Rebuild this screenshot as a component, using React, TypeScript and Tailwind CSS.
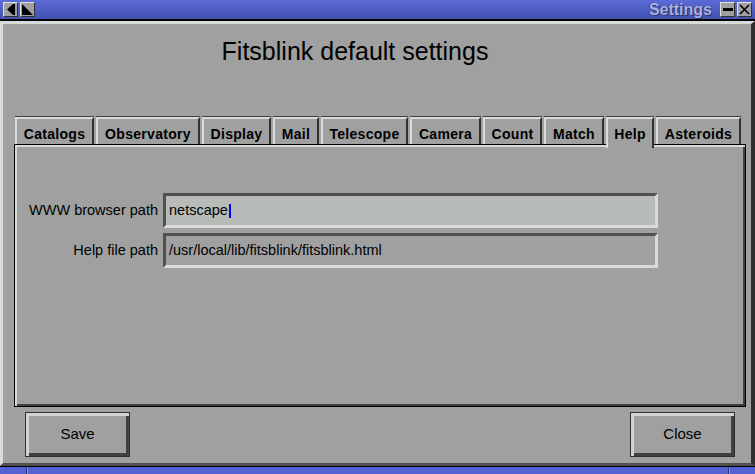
import React from 'react';

const tabs = [
  { label: 'Catalogs', w: 'w-[79px]' },
  { label: 'Observatory', w: 'w-[104px]' },
  { label: 'Display', w: 'w-[69px]' },
  { label: 'Mail', w: 'w-[46px]' },
  { label: 'Telescope', w: 'w-[87px]' },
  { label: 'Camera', w: 'w-[71px]' },
  { label: 'Count', w: 'w-[59px]' },
  { label: 'Match', w: 'w-[60px]' },
  { label: 'Help', w: 'w-[48px]' },
  { label: 'Asteroids', w: 'w-[85px]' },
];

function TitleButton({ children }: { children: React.ReactNode }) {
  return (
    <div className="w-[15px] h-[15px] bg-[#a0a0a0] border border-t-[#e0e4e0] border-l-[#e0e4e0] border-r-[#303030] border-b-[#303030] flex items-center justify-center">
      {children}
    </div>
  );
}

function BevelButton({ label }: { label: string }) {
  return (
    <button className="w-[105px] h-[45px] bg-[#a0a0a0] border border-[#303030] shadow-[inset_3px_3px_0_#d0d4d0,inset_-3px_-3px_0_#404040] text-[15px] text-black">
      {label}
    </button>
  );
}

export default function App() {
  const selected = 'Help';

  return (
    <div className="w-[755px] h-[474px] flex flex-col bg-[#a0a0a0] overflow-hidden font-['Liberation_Sans',Arial,sans-serif]">
      {/* title bar */}
      <div className="h-[19px] flex items-center justify-between px-[3px] bg-gradient-to-b from-[#5c6ad8] to-[#4252b0]">
        <div className="flex gap-[2px]">
          <TitleButton>
            <svg width="11" height="11" viewBox="0 0 11 11">
              <polygon points="2,5.5 8,0 8,11" fill="#000" />
              <rect x="8" y="0" width="2" height="11" fill="#000" />
            </svg>
          </TitleButton>
          <TitleButton>
            <svg width="11" height="11" viewBox="0 0 11 11">
              <polygon points="0,0 0,11 11,11" fill="#000" />
            </svg>
          </TitleButton>
        </div>
        <div className="flex items-center gap-[8px]">
          <span className="text-[16px] font-bold text-[#a8b0dc] [text-shadow:1px_1px_0_#2a3278,-1px_0_0_#3a4290]">
            Settings
          </span>
          <div className="flex gap-[2px]">
            <TitleButton>
              <div className="w-[10px] h-[3px] bg-black" />
            </TitleButton>
            <TitleButton>
              <svg width="11" height="11" viewBox="0 0 11 11">
                <path d="M1 1 L10 10 M10 1 L1 10" stroke="#000" strokeWidth="1.6" />
              </svg>
            </TitleButton>
          </div>
        </div>
      </div>
      <div className="h-[2px] bg-black" />

      {/* window body */}
      <div className="flex-1 flex flex-col border-t-[3px] border-l-[3px] border-t-[#d8dcd8] border-l-[#d8dcd8] border-r-[4px] border-r-[#303030] border-b-[3px] border-b-[#505050]">
        <div className="h-[93px] pt-[13px] pr-[44px] text-center text-[25px] leading-[29px] text-black">
          Fitsblink default settings
        </div>

        <div className="ml-[11px] mr-[5px] flex flex-col">
          <div className="h-[27px] flex items-start gap-[2px] pl-[1px]">
            {tabs.map((t) =>
              t.label === selected ? (
                <div
                  key={t.label}
                  className={`${t.w} h-[31px] relative z-10 bg-[#a0a0a0] border-t-2 border-l-2 border-r-2 border-t-[#d8dcd8] border-l-[#d8dcd8] border-r-[#303030] shadow-[0_-1px_0_#404040] flex justify-center pt-[7px] text-[14px] tracking-[0.3px] font-bold text-black leading-[17px]`}
                >
                  {t.label}
                </div>
              ) : (
                <div
                  key={t.label}
                  className={`${t.w} h-[27px] bg-[#a0a0a0] border-t-2 border-l-2 border-r-2 border-t-[#d8dcd8] border-l-[#d8dcd8] border-r-[#303030] shadow-[0_-1px_0_#404040] flex justify-center pt-[7px] text-[14px] tracking-[0.3px] font-bold text-black leading-[17px]`}
                >
                  {t.label}
                </div>
              )
            )}
          </div>

          <div className="h-[263px] border border-black shadow-[inset_2px_2px_0_#d8dcd8,inset_-2px_-2px_0_#404040] pt-[48px] flex flex-col gap-[5px] text-[14.5px] text-black">
            <div className="flex items-center">
              <label className="w-[143px] text-right">WWW browser path</label>
              <div className="ml-[5px] w-[495px] h-[35px] bg-[#b8bcb8] border-[3px] border-t-[#505050] border-l-[#505050] border-b-[#d8dcd8] border-r-[#d8dcd8] flex items-center pl-[3px]">
                <span>netscape</span>
                <span className="w-[2px] h-[14px] bg-[#0000ff] ml-[1px]" />
              </div>
            </div>
            <div className="flex items-center">
              <label className="w-[143px] text-right">Help file path</label>
              <div className="ml-[5px] w-[495px] h-[35px] bg-[#a0a0a0] border-[3px] border-t-[#505050] border-l-[#505050] border-b-[#d8dcd8] border-r-[#d8dcd8] flex items-center pl-[3px]">
                /usr/local/lib/fitsblink/fitsblink.html
              </div>
            </div>
          </div>
        </div>

        <div className="mt-[5px] ml-[22px] mr-[16px] flex justify-between">
          <BevelButton label="Save" />
          <BevelButton label="Close" />
        </div>
      </div>

      {/* bottom frame */}
      <div className="h-[1px] bg-black" />
      <div className="h-[7px] flex bg-[#5462d4]">
        <div className="w-[27px] border-r border-r-[#2a3478]" />
        <div className="flex-1 border-l border-l-[#8890e8] border-r border-r-[#2a3478]" />
        <div className="w-[26px] border-l border-l-[#8890e8]" />
      </div>
    </div>
  );
}
